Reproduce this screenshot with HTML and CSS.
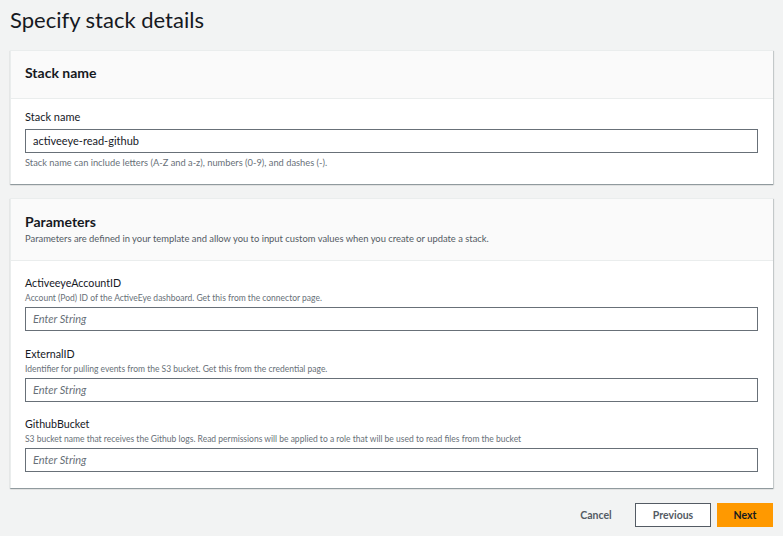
FILE: index.html
```html
<!DOCTYPE html>
<html lang="en">
<head>
<meta charset="utf-8">
<title>Specify stack details</title>
<link rel="stylesheet" href="styles.css">
</head>
<body>
<main class="page">
  <h1 class="page-title">Specify stack details</h1>

  <section class="card card-stack">
    <header class="card-header">
      <h2 class="card-title">Stack name</h2>
    </header>
    <div class="card-body body-stack">
      <label class="field-label">Stack name</label>
      <div class="input">activeeye-read-github</div>
      <p class="hint">Stack name can include letters (A-Z and a-z), numbers (0-9), and dashes (-).</p>
    </div>
  </section>

  <section class="card card-params">
    <header class="card-header header-params">
      <h2 class="card-title">Parameters</h2>
      <p class="card-desc">Parameters are defined in your template and allow you to input custom values when you create or update a stack.</p>
    </header>
    <div class="card-body body-params">
      <div class="field">
        <label class="field-label">ActiveeyeAccountID</label>
        <p class="field-desc">Account (Pod) ID of the ActiveEye dashboard. Get this from the connector page.</p>
        <div class="input placeholder">Enter String</div>
      </div>
      <div class="field">
        <label class="field-label">ExternalID</label>
        <p class="field-desc">Identifier for pulling events from the S3 bucket. Get this from the credential page.</p>
        <div class="input placeholder">Enter String</div>
      </div>
      <div class="field">
        <label class="field-label">GithubBucket</label>
        <p class="field-desc">S3 bucket name that receives the Github logs. Read permissions will be applied to a role that will be used to read files from the bucket</p>
        <div class="input placeholder">Enter String</div>
      </div>
    </div>
  </section>

  <footer class="actions">
    <button class="btn btn-link">Cancel</button>
    <button class="btn btn-normal">Previous</button>
    <button class="btn btn-primary">Next</button>
  </footer>
</main>
</body>
</html>
```

FILE: styles.css
```css
* { box-sizing: border-box; }

html, body {
  margin: 0;
  padding: 0;
  background: #f2f3f3;
  font-family: "Lato", "Open Sans", "Liberation Sans", sans-serif;
  color: #16191f;
}

.page {
  padding: 0 10px 0 10px;
}

.page-title {
  margin: 0;
  padding-top: 6px;
  height: 50px;
  font-size: 22px;
  line-height: 28px;
  font-weight: 400;
  color: #16191f;
}

.card {
  background: #fff;
  border-top: 1px solid #eaeded;
  border-left: 1px solid #eaeded;
  box-shadow: 0 1px 1px 0 rgba(0, 28, 36, 0.3), 1px 1px 1px 0 rgba(0, 28, 36, 0.15);
}

.card-params {
  margin-top: 14px;
}

.card-header {
  background: #fafafa;
  border-bottom: 1px solid #eaeded;
  padding: 12px 15px 15px 14px;
}

.card-title {
  margin: 0;
  font-size: 14px;
  line-height: 20px;
  font-weight: 700;
}

.header-params {
  padding: 13px 15px 13px 14px;
}

.header-params .card-title {
  line-height: 19px;
}

.card-desc {
  margin: 0;
  font-size: 9.4px;
  line-height: 16px;
  color: #545b64;
}

.card-body {
  padding: 10px 15px 14px 14px;
}

.body-params {
  padding: 14px 15px 16px 14px;
}

.field + .field {
  margin-top: 14.5px;
}

.field-label {
  display: block;
  font-size: 10.7px;
  line-height: 16px;
  color: #16191f;
}

.body-stack .field-label {
  font-size: 11px;
  margin-bottom: 4px;
}

.field-desc {
  margin: 0 0 2px;
  font-size: 8.5px;
  line-height: 14px;
  color: #687078;
}

.input {
  height: 24px;
  border: 1px solid #687078;
  background: #fff;
  padding: 0 7px;
  font-size: 11px;
  line-height: 22px;
  color: #16191f;
}

.placeholder {
  font-style: italic;
  color: #687078;
}

.hint {
  margin: 3px 0 0;
  font-size: 9.3px;
  line-height: 14px;
  color: #687078;
}

.actions {
  display: flex;
  justify-content: flex-end;
  align-items: center;
  gap: 6px;
  margin-top: 15px;
}

.btn {
  font-family: inherit;
  font-size: 10.5px;
  font-weight: 700;
  height: 24px;
  padding: 0;
  cursor: pointer;
}

.btn-link {
  background: transparent;
  border: none;
  color: #545b64;
  width: 34px;
  margin-right: 16px;
}

.btn-normal {
  background: #fff;
  border: 1px solid #545b64;
  color: #545b64;
  width: 76px;
}

.btn-primary {
  background: #ff9900;
  border: 1px solid #ff9900;
  color: #16191f;
  width: 56px;
}
```
